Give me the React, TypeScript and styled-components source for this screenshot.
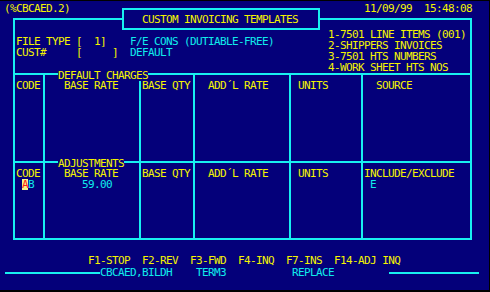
import { FunctionComponent, ReactNode } from 'react';
import styled, { createGlobalStyle } from 'styled-components';

const NAVY = '#04007a';
const YELLOW = '#f4f400';
const CYAN = '#10ecec';
const RULE = '#18f0f0';

const GlobalStyle = createGlobalStyle`
    html, body {
        margin: 0;
        padding: 0;
        background: #000;
    }
`;

const Screen = styled.div`
    position: relative;
    width: 489px;
    height: 289px;
    margin-top: 1px;
    background: ${NAVY};
    font-family: 'DejaVu Sans Mono', 'Liberation Mono', monospace;
    font-size: 11px;
    line-height: 11px;
    letter-spacing: -0.62px;
    color: ${YELLOW};
    white-space: pre;
    overflow: hidden;
`;

const Header = styled.div`
    display: flex;
    height: 17px;
    padding: 2px 0 0 4px;
    box-sizing: border-box;
`;

const ProgramId = styled.div`
    width: 360px;
`;

const TitleBox = styled.div`
    position: absolute;
    left: 122px;
    top: 7px;
    width: 198px;
    height: 22px;
    box-sizing: border-box;
    border: 2px solid ${RULE};
    background: ${NAVY};
    display: flex;
    align-items: center;
    justify-content: center;
    padding-right: 2px;
    z-index: 2;
`;

const MainBox = styled.div`
    margin-left: 13px;
    width: 459px;
    height: 222px;
    box-sizing: border-box;
    border: 2px solid ${RULE};
    display: flex;
    flex-direction: column;
`;

const TopSection = styled.div`
    display: flex;
    height: 53px;
`;

const FileInfo = styled.div`
    width: 313px;
    box-sizing: border-box;
    padding: 16px 0 0 1px;
`;

const InfoRow = styled.div`
    display: grid;
    grid-template-columns: 114px auto;
`;

const TypeList = styled.div`
    padding-top: 9px;
`;

const Text = styled.span<{ $tone?: 'yellow' | 'cyan' }>`
    color: ${(p) => (p.$tone == 'cyan' ? CYAN : YELLOW)};
`;

const Cursor = styled.span`
    display: inline-block;
    width: 6px;
    background: #f6f68a;
    color: #ff1a1a;
`;

const Table = styled.div`
    position: relative;
    flex: 1;
    display: grid;
    grid-template-columns: 28px 96px 54px 96px 72px 1fr;
    grid-template-rows: 86px 1fr;
    border-top: 2px solid ${RULE};
`;

const Cell = styled.div<{ $pad: number; $first?: boolean; $lower?: boolean }>`
    box-sizing: border-box;
    padding-top: 5px;
    padding-left: ${(p) => p.$pad}px;
    border-left: ${(p) => (p.$first ? 'none' : `2px solid ${RULE}`)};
    border-top: ${(p) => (p.$lower ? `2px solid ${RULE}` : 'none')};
`;

const Legend = styled.div<{ $top: number }>`
    position: absolute;
    left: 43px;
    top: ${(p) => p.$top}px;
    background: ${NAVY};
`;

const FKeys = styled.div`
    margin-top: 15px;
    padding-left: 88px;
`;

const StatusRow = styled.div`
    display: flex;
    align-items: center;
    height: 11px;
    margin-top: 1px;
    color: ${CYAN};
`;

const Rule = styled.div<{ $width: number; $offset: number }>`
    width: ${(p) => p.$width}px;
    margin-left: ${(p) => p.$offset}px;
    height: 2px;
    background: ${RULE};
`;

const StatusField = styled.div`
    width: 96px;
`;

interface ColumnCellProps {
    pad: number;
    first?: boolean;
    lower?: boolean;
    children?: ReactNode;
}

const ColumnCell: FunctionComponent<ColumnCellProps> = ({ pad, first, lower, children }) => (
    <Cell $pad={pad} $first={first} $lower={lower}>
        {children}
    </Cell>
);

const App: FunctionComponent = () => {
    return (
        <>
            <GlobalStyle />
            <Screen>
                <Header>
                    <ProgramId>(%CBCAED.2)</ProgramId>
                    <div>11/09/99  15:48:08</div>
                </Header>
                <TitleBox>CUSTOM INVOICING TEMPLATES</TitleBox>

                <MainBox>
                    <TopSection>
                        <FileInfo>
                            <InfoRow>
                                <Text>FILE TYPE [  1]</Text>
                                <Text $tone="cyan">F/E CONS (DUTIABLE-FREE)</Text>
                            </InfoRow>
                            <InfoRow>
                                <Text>CUST#     [     ]</Text>
                                <Text $tone="cyan">DEFAULT</Text>
                            </InfoRow>
                        </FileInfo>
                        <TypeList>
                            <div>1-7501 LINE ITEMS (001)</div>
                            <div>2-SHIPPERS INVOICES</div>
                            <div>3-7501 HTS NUMBERS</div>
                            <div>4-WORK SHEET HTS NOS</div>
                        </TypeList>
                    </TopSection>

                    <Table>
                        <Legend $top={-5}>DEFAULT CHARGES</Legend>
                        <ColumnCell pad={1} first>CODE</ColumnCell>
                        <ColumnCell pad={19}>BASE RATE</ColumnCell>
                        <ColumnCell pad={1}>BASE QTY</ColumnCell>
                        <ColumnCell pad={13}>ADD´L RATE</ColumnCell>
                        <ColumnCell pad={7}>UNITS</ColumnCell>
                        <ColumnCell pad={13}>SOURCE</ColumnCell>

                        <Legend $top={83}>ADJUSTMENTS</Legend>
                        <ColumnCell pad={1} first lower>
                            <div>CODE</div>
                            <div>
                                {' '}
                                <Cursor>A</Cursor>
                                <Text $tone="cyan">B</Text>
                            </div>
                        </ColumnCell>
                        <ColumnCell pad={19} lower>
                            <div>BASE RATE</div>
                            <Text $tone="cyan">   59.00</Text>
                        </ColumnCell>
                        <ColumnCell pad={1} lower>BASE QTY</ColumnCell>
                        <ColumnCell pad={13} lower>ADD´L RATE</ColumnCell>
                        <ColumnCell pad={7} lower>UNITS</ColumnCell>
                        <ColumnCell pad={1} lower>
                            <div>INCLUDE/EXCLUDE</div>
                            <Text $tone="cyan"> E</Text>
                        </ColumnCell>
                    </Table>
                </MainBox>

                <FKeys>F1-STOP  F2-REV  F3-FWD  F4-INQ  F7-INS  F14-ADJ INQ</FKeys>
                <StatusRow>
                    <Rule $width={95} $offset={5} />
                    <StatusField>CBCAED,BILDH</StatusField>
                    <StatusField>TERM3</StatusField>
                    <StatusField>REPLACE</StatusField>
                    <Rule $width={90} $offset={1} />
                </StatusRow>
            </Screen>
        </>
    );
};

export default App;
